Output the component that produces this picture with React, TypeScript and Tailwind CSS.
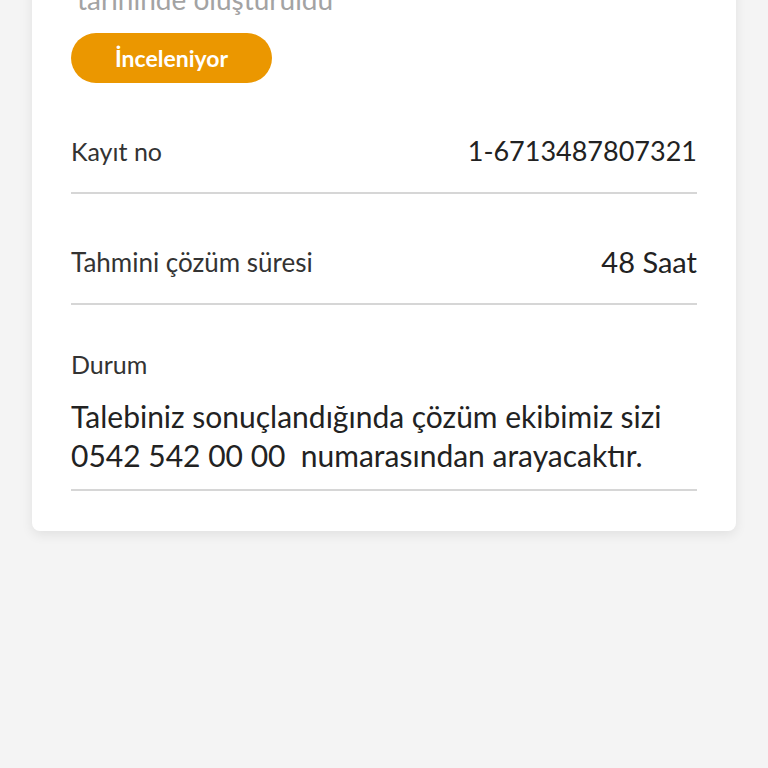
import React from "react";

export default function App() {
  return (
    <div className="min-h-[768px] w-full bg-[#f4f4f4] overflow-hidden" style={{ fontFamily: "Lato, 'Noto Sans', sans-serif" }}>
      <div className="mx-[32px] -mt-[17px] rounded-b-[8px] bg-white px-[39px] pb-[40px] shadow-[0_4px_12px_rgba(0,0,0,0.08)]">
        <div className="pl-[6px] text-[28px] leading-[32px] text-[#a3a3a3]">tarihinde oluşturuldu</div>
        <div className="mt-[18px] flex">
          <div className="flex h-[50px] w-[201px] items-center justify-center rounded-full bg-[#eb9700] text-[23px] font-bold text-white">
            İnceleniyor
          </div>
        </div>
        <div className="flex items-center justify-between border-b-2 border-[#d6d6d6] pt-[52px] pb-[25px] leading-[32px]">
          <span className="text-[25px] text-[#333333]">Kayıt no</span>
          <span className="text-[27px] text-[#222222]">1-6713487807321</span>
        </div>
        <div className="flex items-center justify-between border-b-2 border-[#d6d6d6] pt-[52px] pb-[25px] leading-[32px]">
          <span className="text-[26px] text-[#333333]">Tahmini çözüm süresi</span>
          <span className="text-[29px] text-[#222222]">48 Saat</span>
        </div>
        <div className="border-b-2 border-[#d6d6d6] pt-[45px] pb-[14px]">
          <div className="text-[25px] leading-[28px] text-[#333333]">Durum</div>
          <div className="mt-[19px] text-[30px] leading-[39px] text-[#222222]">
            Talebiniz sonuçlandığında çözüm ekibimiz sizi
            <br />
            0542 542 00 00&nbsp; numarasından arayacaktır.
          </div>
        </div>
      </div>
    </div>
  );
}
